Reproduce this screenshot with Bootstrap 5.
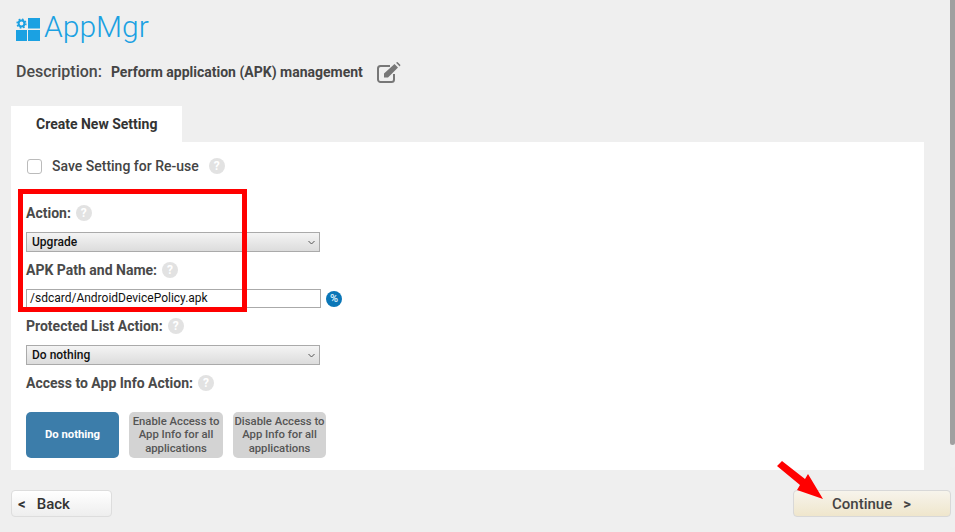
<!DOCTYPE html>
<html lang="en"><head><meta charset="utf-8"><title>AppMgr</title>
<link href="https://cdn.jsdelivr.net/npm/bootstrap@5.3.0/dist/css/bootstrap.min.css" rel="stylesheet">
<style>
html,body{height:100%}
body{background:#efefef;font-family:Roboto,"Liberation Sans",sans-serif;color:#444;overflow:hidden;width:955px;height:532px}
.shell{width:955px;height:532px;padding:0 4px 0 11px}
.pg-head{height:106px}
.ttl{padding:18px 0 0 5px;height:58px;gap:4px}
.ttl-txt{font-size:30px;line-height:42px;color:#1ba1e2;font-weight:300;margin-top:-12px;margin-left:0}
.desc{padding-left:5px;height:28px}
.desc-l{font-size:16px;font-weight:500;color:#4a4a4a;margin-right:9px}
.desc-v{font-size:14px;font-weight:700;color:#444;margin-right:14px}
.tabbar{height:36px}
.tab1{width:171px;height:36px;background:#fff;font-size:14px;font-weight:700;color:#333;padding-left:25px;line-height:36px}
.panel{width:913px;height:328px;background:#fff;padding:0 15px}
.saverow{height:46px;padding-top:2px}
.chk{width:15px;height:15px;border:1px solid #bbb;border-radius:3px;margin:0 10px 0 1px;padding:0}
.lbl{font-size:14px;font-weight:500;color:#444;line-height:20px}
.lblb{font-weight:700;color:#4a4a4a}
.qm{display:inline-block;width:16px;height:16px;border-radius:50%;background:#e2e2e2;color:#fff;font-size:12px;font-weight:700;line-height:16px;text-align:center;margin-left:5px;vertical-align:1px}
.qm-wide{margin-left:10px}
.fld{height:57px}
.fld-s{height:56px}
.fldt{height:44px;padding-top:15px;line-height:20px;font-size:14px}
.selx{width:294px;height:20px;border:1px solid #aaa;background:linear-gradient(#f4f4f4,#dcdcdc);font-size:12px;font-weight:500;color:#111;padding-left:5px;line-height:18px}
.inpx{width:295px;height:19px;border:1px solid #aaa;background:#fff;font-size:12px;font-weight:400;color:#111;padding:0 3px;line-height:17px}
.pct{width:16px;height:16px;border-radius:50%;background:#0a76b7;color:#cfe8f7;font-size:11px;font-weight:700;line-height:16px;text-align:center;margin-left:5px}
.opts{gap:10px;margin-top:10px}
.opt{height:46px;border-radius:5px;font-size:11.300px;font-weight:500;line-height:13.500px;color:#555;background:#d3d3d3;text-align:center}
.opt-on{width:93px;background:#3c7daa;color:#fff;font-weight:700}
.opt-a{width:94px}
.opt-b{width:93px}
.foot{height:62px;padding-top:20px;padding-right:0;width:940px}
.bk{width:101px;height:27px;border:1px solid #ddd;border-radius:4px;background:linear-gradient(#fff,#eee);font-size:15px;font-weight:500;color:#333;padding-left:6px;line-height:27px}
.ct{width:158px;height:27px;border:1px solid #d8d8d8;border-radius:4px;background:linear-gradient(#f7f4ec,#efe6cc);font-size:15px;font-weight:500;color:#444;line-height:27px;padding-left:38px}
.gt{margin-left:11px;font-weight:700}
.lt{margin-right:11px;font-weight:700}
.scrl{position:absolute;right:0;top:0;width:5px;height:468px;background:#f0f0f0;border-radius:0 0 3px 3px}
.scrl i{display:block;height:445px;background:#a0a0a0;border-radius:0 0 3px 3px}
.redbox{position:absolute;left:18px;top:189px;width:229px;height:123px;border:5px solid #f00}
.arrow{position:absolute;left:775px;top:458px}
</style></head>
<body class="position-relative">
<div class="shell">
  <div class="pg-head">
    <div class="ttl d-flex align-items-start">
      <svg width="24" height="23" viewBox="0 0 24 23"><path fill="#1ba1e2" d="M12 0h12v10.500H12zM0 12h11v11H0zM12 12h12v11H12z"/><circle cx="5.500" cy="5.500" r="2.900" fill="none" stroke="#1ba1e2" stroke-width="2"/><circle cx="5.500" cy="5.500" r="4.400" fill="none" stroke="#1ba1e2" stroke-width="1.500" stroke-dasharray="1.700 1.750"/></svg>
      <span class="ttl-txt">AppMgr</span>
    </div>
    <div class="desc d-flex align-items-center">
      <span class="desc-l">Description:</span><span class="desc-v">Perform application (APK) management</span>
      <svg width="24" height="21" viewBox="0 0 24 21"><path d="M13 4H3.500A2.500 2.500 0 0 0 1 6.500v11A2.500 2.500 0 0 0 3.500 20h11a2.500 2.500 0 0 0 2.500-2.500V12" fill="none" stroke="#777" stroke-width="2"/><path fill="#777" d="M7 11.500 17.500 2l3.500 3.500L11 15.500H7zM19 .8l1.500-.8 3 3-.8 1.500z"/></svg>
    </div>
  </div>
  <div class="tabbar"><div class="tab1">Create New Setting</div></div>
  <div class="panel">
    <div class="saverow d-flex align-items-center">
      <span class="chk d-inline-block"></span><span class="lbl">Save Setting for Re-use</span><span class="qm qm-wide">?</span>
    </div>
    <div class="fld">
      <div class="fldt lbl lblb">Action:<span class="qm">?</span></div>
      <div class="selx d-flex justify-content-between align-items-center"><span>Upgrade</span><svg class="me-1" width="7" height="5" viewBox="0 0 7 5"><path d="M.5 1 3.500 4l3-3" fill="none" stroke="#555"/></svg></div>
    </div>
    <div class="fld-s">
      <div class="fldt lbl lblb">APK Path and Name:<span class="qm">?</span></div>
      <div class="d-flex align-items-center"><div class="inpx">/sdcard/AndroidDevicePolicy.apk</div><span class="pct">%</span></div>
    </div>
    <div class="fld">
      <div class="fldt lbl lblb">Protected List Action:<span class="qm">?</span></div>
      <div class="selx d-flex justify-content-between align-items-center"><span>Do nothing</span><svg class="me-1" width="7" height="5" viewBox="0 0 7 5"><path d="M.5 1 3.500 4l3-3" fill="none" stroke="#555"/></svg></div>
    </div>
    <div class="fldt lbl lblb">Access to App Info Action:<span class="qm">?</span></div>
    <div class="opts d-flex">
      <div class="opt opt-on d-flex align-items-center justify-content-center">Do nothing</div>
      <div class="opt opt-a d-flex align-items-center justify-content-center">Enable Access to App Info for all applications</div>
      <div class="opt opt-b d-flex align-items-center justify-content-center">Disable Access to App Info for all applications</div>
    </div>
  </div>
  <div class="foot d-flex justify-content-between align-items-start">
    <div class="bk"><span class="lt">&lt;</span>Back</div>
    <div class="ct">Continue<span class="gt">&gt;</span></div>
  </div>
</div>
<div class="scrl"><i></i></div>
<div class="redbox"></div>
<svg class="arrow" width="60" height="46" viewBox="0 0 60 46"><path fill="#f00" d="M7 3 30 21l3-5 15 25-26-9 3-5L2 8z"/></svg>
</body></html>
